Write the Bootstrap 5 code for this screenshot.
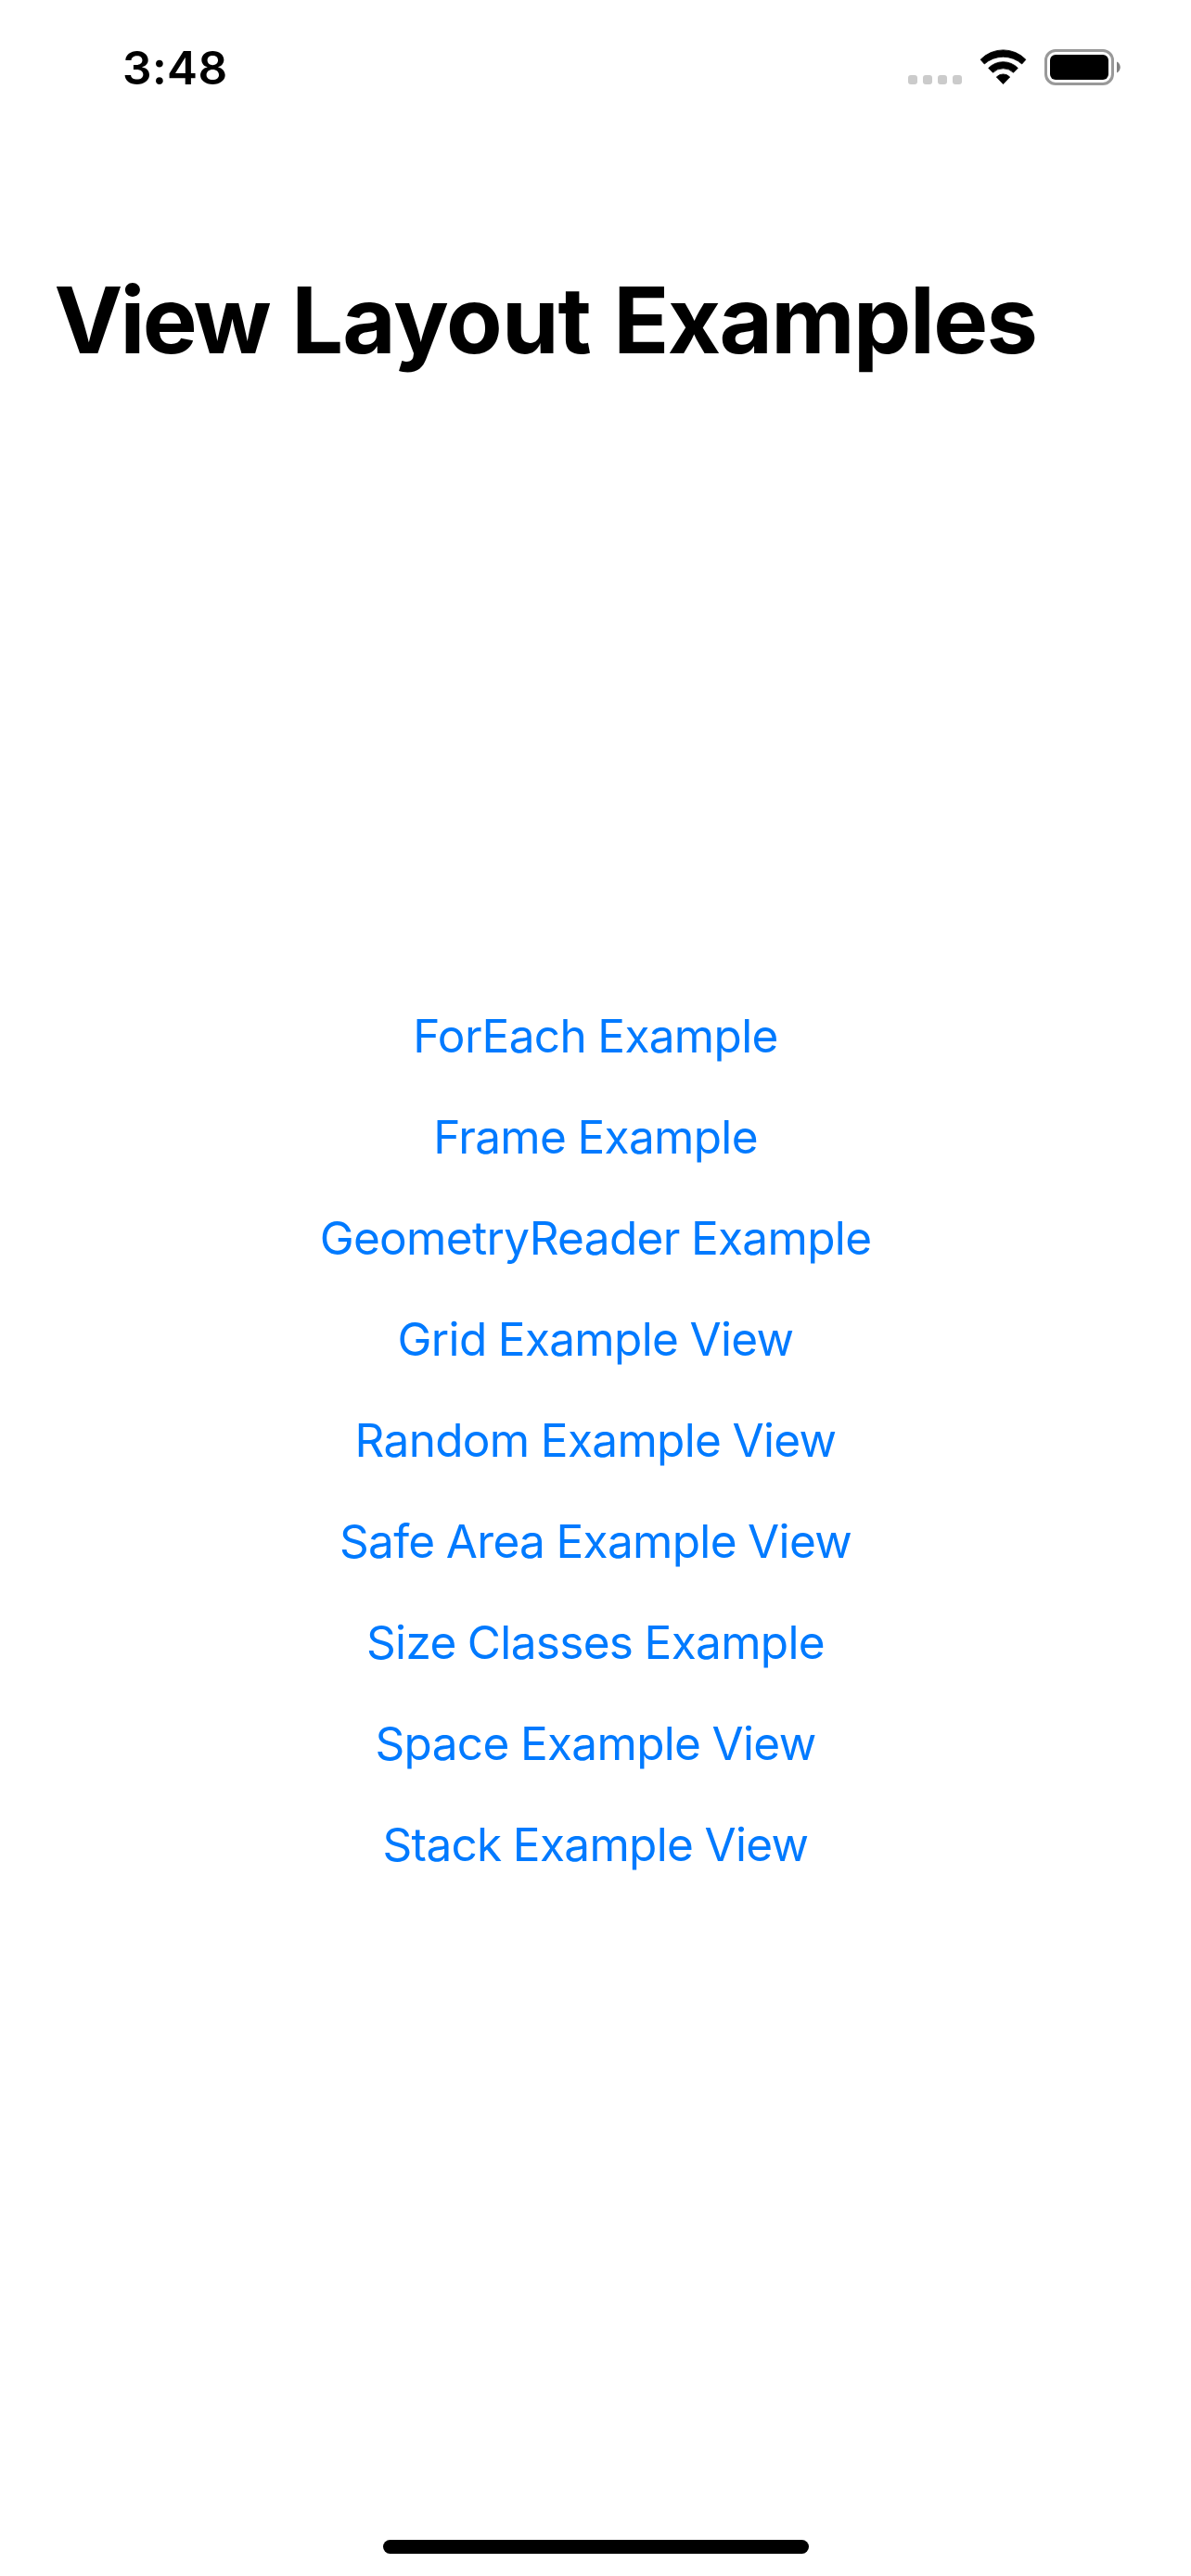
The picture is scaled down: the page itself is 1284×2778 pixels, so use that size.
<!DOCTYPE html>
<html lang="en">
<head>
<meta charset="utf-8">
<meta name="viewport" content="width=device-width, initial-scale=1">
<title>View Layout Examples</title>
<link href="https://cdn.jsdelivr.net/npm/bootstrap@5.3.0/dist/css/bootstrap.min.css" rel="stylesheet">
<style>
  body { font-family: Inter, "Liberation Sans", sans-serif; color: #000; background: #fff; }
  .screen { height: 2778px; overflow: hidden; }
  .top-area { height: 431px; }
  .status-bar { height: 141px; padding: 43px 76px 0 132px; }
  .clock { font-size: 49.5px; line-height: 60px; font-weight: 600; letter-spacing: .4px; }
  .status-icons { gap: 19px; padding-top: 10px; }
  .page-title { font-size: 99px; line-height: 120px; font-weight: 700; letter-spacing: -1.6px; word-spacing: 2.5px; padding: 144px 0 0 58.5px; }
  .title-tight { letter-spacing: -2.8px; }
  .title-loose { letter-spacing: -.9px; }
  .example-links { gap: 48px; }
  .example-links .nav-link { font-size: 49.5px; line-height: 61px; color: #007aff; letter-spacing: -.67px; word-spacing: -1px; padding: 0; }
  .home-area { height: 102px; padding-bottom: 24px; }
  .home-bar { width: 459px; height: 15px; }
</style>
</head>
<body>
<div class="screen d-flex flex-column">
  <header class="top-area flex-shrink-0">
    <div class="status-bar d-flex justify-content-between align-items-start">
      <span class="clock">3:48</span>
      <div class="status-icons d-flex">
        <svg width="58" height="40" viewBox="0 0 58 40" fill="#cbcbcb" aria-hidden="true">
          <rect x="0" y="28" width="10" height="10" rx="3"/><rect x="16" y="28" width="10" height="10" rx="3"/><rect x="32" y="28" width="10" height="10" rx="3"/><rect x="48" y="28" width="10" height="10" rx="3"/>
        </svg>
        <svg width="51" height="40" viewBox="0 0 51 40" aria-hidden="true" stroke="#000" stroke-width=".8" stroke-linejoin="round">
          <path d="M1.1 11.3A33.8 33.8 0 0 1 49.9 11.3L45.7 16A30.4 30.4 0 0 0 5.3 16Z"/>
          <path d="M9.7 20.4A22 22 0 0 1 41.3 20.4L36.5 25.3A15.8 15.8 0 0 0 14.5 25.3Z"/>
          <path d="M18.3 30A10 10 0 0 1 32.7 30L25.5 37.6Z"/>
        </svg>
        <svg width="82" height="40" viewBox="0 0 82 40" aria-hidden="true">
          <rect x="1.5" y="1.5" width="72" height="36" rx="10.5" fill="none" stroke="#999" stroke-width="3"/>
          <rect x="6" y="6" width="63" height="27" rx="6"/>
          <path d="M78 13.5C83 15.500 83 23.500 78 25.500Z" fill="#808080"/>
        </svg>
      </div>
    </div>
    <h1 class="page-title text-nowrap mb-0"><span class="title-tight">View</span> <span class="title-loose">Layout</span> Examples</h1>
  </header>
  <main class="flex-grow-1 d-flex flex-column justify-content-center">
    <nav class="nav example-links flex-column align-items-center">
      <a class="nav-link" href="#">ForEach Example</a>
      <a class="nav-link" href="#">Frame Example</a>
      <a class="nav-link" href="#">GeometryReader Example</a>
      <a class="nav-link" href="#">Grid Example View</a>
      <a class="nav-link" href="#">Random Example View</a>
      <a class="nav-link" href="#">Safe Area Example View</a>
      <a class="nav-link" href="#">Size Classes Example</a>
      <a class="nav-link" href="#">Space Example View</a>
      <a class="nav-link" href="#">Stack Example View</a>
    </nav>
  </main>
  <footer class="home-area flex-shrink-0 d-flex justify-content-center align-items-end">
    <div class="home-bar bg-black rounded-pill"></div>
  </footer>
</div>
<script src="https://cdn.jsdelivr.net/npm/bootstrap@5.3.0/dist/js/bootstrap.bundle.min.js"></script>
</body>
</html>
